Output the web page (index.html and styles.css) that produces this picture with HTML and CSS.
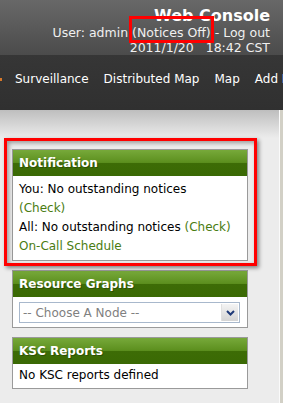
FILE: index.html
```html
<!DOCTYPE html>
<html lang="en">
<head>
    <meta charset="UTF-8">
    <meta name="viewport" content="width=device-width, initial-scale=1.0">
    <title>Web Console</title>
    <link rel="stylesheet" href="styles.css">
</head>
<body>
    <div class="header">
        <div class="title">Web Console</div>
        <div class="user">User: admin <a href="#" class="notices">(Notices Off)</a> - <a href="#">Log out</a></div>
        <div class="date">2011/1/20&nbsp;&nbsp;&nbsp;18:42 CST</div>
    </div>
    <div class="navbar">
        <span class="nav-tail"></span>
        <a href="#">Surveillance</a>
        <a href="#">Distributed Map</a>
        <a href="#">Map</a>
        <a href="#">Add Node</a>
    </div>
    <div class="main">
        <div class="content">
            <div class="panel marked">
                <div class="panel-title">Notification</div>
                <div class="panel-body">
                    You: No outstanding notices<br>
                    <a href="#">(Check)</a><br>
                    All: No outstanding notices <a href="#">(Check)</a><br>
                    <a href="#">On-Call Schedule</a>
                </div>
            </div>
            <div class="panel">
                <div class="panel-title">Resource Graphs</div>
                <div class="panel-body select-body">
                    <div class="node-select">
                        <select>
                            <option>-- Choose A Node --</option>
                        </select>
                        <span class="arrow">
                            <svg width="9" height="6" viewBox="0 0 9 6"><path d="M1 1 L4.5 4.5 L8 1" fill="none" stroke="#1f3a78" stroke-width="2"/></svg>
                        </span>
                    </div>
                </div>
            </div>
            <div class="panel">
                <div class="panel-title">KSC Reports</div>
                <div class="panel-body short">No KSC reports defined</div>
            </div>
        </div>
        <div class="edge"></div>
    </div>
</body>
</html>
```

FILE: styles.css
```css
html, body {
    height: 100%;
}

body {
    font-family: "DejaVu Sans", Verdana, sans-serif;
    margin: 0;
    padding: 0;
    display: flex;
    flex-direction: column;
    overflow: hidden;
    background-color: #ececec;
}

a {
    text-decoration: none;
}

.header {
    background: linear-gradient(#686868, #4b4b4b);
    color: #f0f0f0;
    text-align: right;
    padding: 5px 13px 0 0;
    height: 50px;
    font-size: 12.5px;
    white-space: nowrap;
}

.header a {
    color: #f0f0f0;
}

.title {
    font-size: 16px;
    font-weight: bold;
    line-height: 21px;
    color: #fff;
}

.user {
    line-height: 14px;
}

.date {
    line-height: 15px;
}

.notices {
    position: relative;
}

.notices::after {
    content: "";
    position: absolute;
    top: -9px;
    bottom: -3px;
    left: -3px;
    right: -3px;
    border: 3px solid #f00;
}

.navbar {
    background: linear-gradient(#363636, #303030);
    height: 38px;
    padding-top: 17px;
    display: flex;
    align-items: flex-start;
    white-space: nowrap;
    overflow: hidden;
    font-size: 12px;
    line-height: 14px;
}

.navbar a {
    color: #fff;
    margin-right: 15px;
}

.nav-tail {
    width: 2px;
    height: 3px;
    margin-top: 6px;
    margin-right: 13px;
    background: #d8782a;
    flex: none;
}

.main {
    flex: 1;
    display: flex;
    background: linear-gradient(#bebebe, #ececec 28px);
}

.content {
    flex: 1;
    padding: 39px 0 0 12px;
}

.edge {
    width: 3px;
    border-left: 1px solid #fafafa;
    background: #d2d0c6;
}

.panel {
    width: 234px;
    border: 1px solid #9a9a9a;
    background: #fff;
    margin-bottom: 9px;
    font-size: 12px;
    color: #000;
}

.marked {
    position: relative;
}

.marked::after {
    content: "";
    position: absolute;
    top: -12px;
    left: -9px;
    right: -10px;
    bottom: -6px;
    border: 3px solid #f00;
    box-shadow: 2px 2px 4px rgba(0, 0, 0, 0.45), inset 2px 2px 4px rgba(0, 0, 0, 0.35);
    pointer-events: none;
}

.panel-title {
    height: 26px;
    line-height: 26px;
    padding-left: 6px;
    color: #fff;
    font-weight: bold;
    text-shadow: 1px 1px 0 rgba(0, 0, 0, 0.25);
    background: linear-gradient(#77a93a 0%, #5c8f1e 48%, #3d6c06 50%, #3a6904 100%);
}

.panel-body {
    padding: 4px 6px;
    line-height: 19px;
}

.panel-body a {
    color: #4a7c12;
}

.select-body {
    padding: 5px 7px 4px 6px;
    line-height: normal;
}

.node-select {
    display: flex;
    height: 19px;
    border: 1px solid #a8b8cc;
    background: #fff;
}

.node-select select {
    flex: 1;
    appearance: none;
    -webkit-appearance: none;
    border: none;
    background: transparent;
    font-family: "DejaVu Sans", Verdana, sans-serif;
    font-size: 12px;
    color: #808080;
    padding: 0 0 0 3px;
    outline: none;
}

.arrow {
    width: 16px;
    margin: 1px;
    display: flex;
    align-items: center;
    justify-content: center;
    background: linear-gradient(#f4f4f4, #d4d4d4);
    border-left: 1px solid #e0e0e0;
}

.short {
    padding: 2px 6px 3px;
}
```
